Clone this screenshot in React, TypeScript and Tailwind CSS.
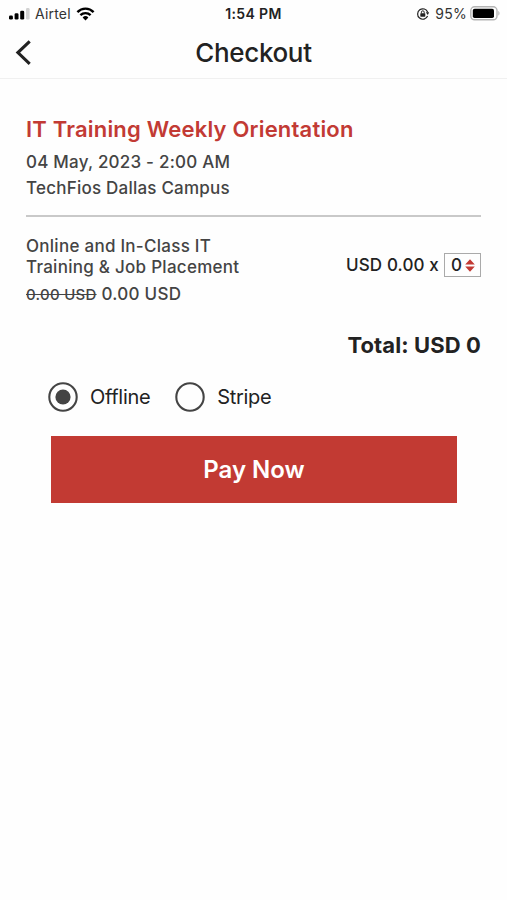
import React, { useState } from 'react';

const SignalIcon = () => (
    <svg className="block" width="21" height="12" viewBox="0 0 21 12">
        <rect x="0" y="7.4" width="3.9" height="4.1" rx="1.3" fill="#000" />
        <rect x="5.6" y="5.2" width="3.9" height="6.3" rx="1.3" fill="#000" />
        <rect x="11.2" y="2.7" width="4" height="8.8" rx="1.3" fill="#000" />
        <rect x="17" y="0" width="3.6" height="11.5" rx="1.3" fill="#d2d2d2" />
    </svg>
);

const WifiIcon = () => (
    <svg className="block" width="19" height="14" viewBox="0 0 18 14" fill="none" stroke="#000" strokeWidth="2.4">
        <path d="M.9 5.1C5.4.5 12.6.5 17.1 5.1" />
        <path d="M3.9 8.2c2.9-2.8 7.3-2.8 10.2 0" />
        <path d="M6.1 10.4a4.2 4.2 0 0 1 5.8 0L9 13.4z" fill="#000" stroke="none" />
    </svg>
);

const RotationLockIcon = () => (
    <svg className="block" width="14" height="14" viewBox="0 0 14 14" fill="none" stroke="#222">
        <path d="M11.6 9.1A5.2 5.2 0 1 1 11.7 5.2" strokeWidth="1.2" />
        <path d="M9.8 5.3h3.4l-1.4 2.6z" fill="#222" stroke="none" />
        <rect x="4.3" y="6.2" width="5" height="3.5" rx=".6" fill="#222" stroke="none" />
        <path d="M5.4 6.4V5.2a1.4 1.4 0 0 1 2.8 0v1.2" strokeWidth="1" />
    </svg>
);

const BatteryIcon = () => (
    <svg className="block" width="31" height="15" viewBox="0 0 31 15">
        <rect x=".8" y=".8" width="26.2" height="13" rx="3.8" fill="#fff" stroke="#b4b4b4" strokeWidth="1.4" />
        <rect x="2.8" y="2.7" width="21.2" height="9.3" rx="1.8" fill="#000" />
        <path d="M28.3 5c1.6.6 1.6 4 0 4.6z" fill="#b4b4b4" />
    </svg>
);

const methods = ['Offline', 'Stripe'];

const Checkout: React.FC = () => {
    const [method, setMethod] = useState('Offline');
    const [qty, setQty] = useState(0);

    return (
        <div className="min-h-[900px] w-[507px] bg-[#fefefe] font-['Inter',sans-serif] text-[#222]">
            <header className="h-[79px] border-b border-[#f0f0f0]">
                <div className="grid h-[27px] grid-cols-[1fr_auto_1fr] items-center px-[6px]">
                    <div className="flex items-center pl-[3px]">
                        <SignalIcon />
                        <span className="ml-[5px] text-[14px] leading-none tracking-[0.2px] text-[#333]">Airtel</span>
                        <span className="ml-[5px]"><WifiIcon /></span>
                    </div>
                    <span className="text-center text-[14px] leading-none font-semibold tracking-[0.35px]">1:54 PM</span>
                    <div className="flex items-center justify-end">
                        <RotationLockIcon />
                        <span className="mr-[3px] ml-[5px] text-[14px] leading-none tracking-[0.3px] text-[#333]">95%</span>
                        <BatteryIcon />
                    </div>
                </div>
                <div className="grid h-[51px] grid-cols-[1fr_auto_1fr] items-center px-[15px]">
                    <button type="button" aria-label="Back" className="w-5">
                        <svg className="block" width="17" height="26" viewBox="0 0 17 26" fill="none" stroke="#222" strokeWidth="3.1">
                            <path d="M14.7 1.4 2.9 12.6 14.7 23.8" />
                        </svg>
                    </button>
                    <h1 className="text-[26px] leading-none font-medium tracking-[-0.35px]">Checkout</h1>
                </div>
            </header>

            <main className="px-[26px] pt-[37px]">
                <h2 className="text-[22px] leading-[26px] font-semibold tracking-[0.2px] whitespace-nowrap text-[#c23a34]">IT Training Weekly Orientation</h2>
                <div className="mt-[7px] text-[17px] leading-[26px] font-medium tracking-[0.22px] text-[#444]">
                    <p>04 May, 2023 - 2:00 AM</p>
                    <p>TechFios Dallas Campus</p>
                </div>
                <hr className="mt-[14px] border-t-2 border-[#c9c9c9]" />

                <div className="mt-[18px] flex items-start justify-between">
                    <div className="pt-px text-[17px] font-medium tracking-[0.27px] whitespace-nowrap text-[#444]">
                        <p className="leading-[21px]">Online and In-Class IT<br />Training &amp; Job Placement</p>
                        <p className="mt-[6px] flex items-center leading-[21px]">
                            <s className="text-[15px] leading-[19px]">0.00 USD</s>
                            <span className="ml-[5px]">0.00 USD</span>
                        </p>
                    </div>
                    <div className="mt-[18px] flex h-6 items-center text-[17px] leading-none font-medium">
                        <span className="tracking-[0.15px]">USD 0.00 x</span>
                        <button
                            type="button"
                            onClick={() => setQty(qty + 1)}
                            className="ml-[5px] flex h-6 w-[37px] items-center justify-between border border-[#aaa] pr-[5px] pl-[6px]"
                        >
                            <span>{qty}</span>
                            <svg className="block" width="10" height="13" viewBox="0 0 10 13" fill="#c23a34">
                                <path d="M5 .3 9.8 5.6H.2zM5 12.7 9.8 7.4H.2z" />
                            </svg>
                        </button>
                    </div>
                </div>

                <p className="mt-[26px] text-right text-[22px] leading-[28px] font-bold tracking-[0.1px]">Total: USD 0</p>

                <div className="mt-[23px] ml-[22px] flex h-[30px] items-center gap-[25px]">
                    {methods.map(m => (
                        <button key={m} type="button" onClick={() => setMethod(m)} className="flex items-center gap-[12px]">
                            <svg className="block" width="30" height="30" viewBox="0 0 30 30">
                                <circle cx="15" cy="15" r="13.7" fill="none" stroke="#444" strokeWidth="2.1" />
                                {m === method && <circle cx="15" cy="15" r="7.6" fill="#444" />}
                            </svg>
                            <span className="text-[20px] leading-none tracking-[-0.32px]">{m}</span>
                        </button>
                    ))}
                </div>

                <button type="button" className="mt-[24px] ml-[25px] flex h-[67px] w-[406px] items-center justify-center bg-[#c23a33] text-[24px] leading-none font-semibold text-white">
                    Pay Now
                </button>
            </main>
        </div>
    );
};

export default Checkout;
